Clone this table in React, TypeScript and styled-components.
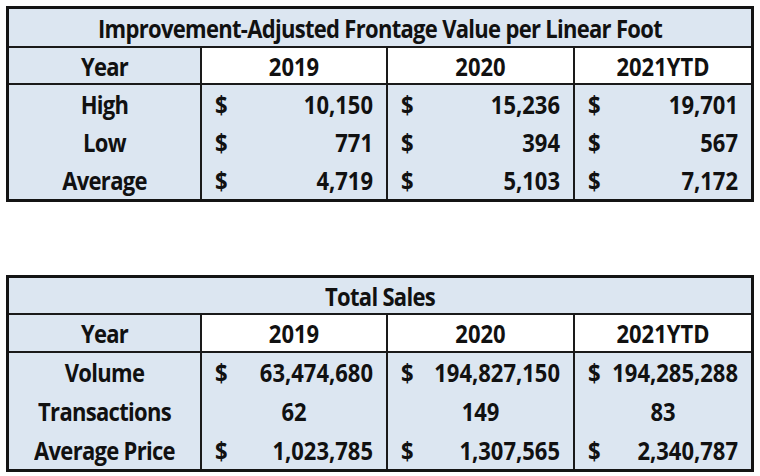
import styled, { createGlobalStyle } from 'styled-components';

const Global = createGlobalStyle`
  body {
    margin: 0;
    background: #ffffff;
    font-family: 'Open Sans', 'Liberation Sans', sans-serif;
  }
`;

const Page = styled.div`
  display: flex;
  flex-direction: column;
  gap: 73px;
  padding: 6px 0 0 6px;
  width: 748px;
`;

const Table = styled.div<{ $rows: string }>`
  display: grid;
  grid-template-columns: 191px 186px 187px 178px;
  grid-template-rows: ${({ $rows }) => $rows};
  border: 3px solid #141414;
  background: #dce6f1;
  color: #111;
  font-weight: 700;
  font-size: 22px;
`;

// Calibri in the original is a little taller than Open Sans at the same width
const Txt = styled.span`
  display: inline-block;
  transform: scaleY(1.1);
`;

const Title = styled.div`
  grid-column: 1 / -1;
  display: flex;
  align-items: center;
  justify-content: center;
  letter-spacing: -0.7px;
  border-bottom: 2px solid #1a1a1a;
`;

const Cell = styled.div<{ $head?: boolean; $first?: boolean; $white?: boolean }>`
  display: flex;
  align-items: center;
  justify-content: center;
  letter-spacing: ${({ $first }) => ($first ? '-0.7px' : '0')};
  background: ${({ $white }) => ($white ? '#ffffff' : 'transparent')};
  border-left: ${({ $first }) => ($first ? 'none' : '2px solid #1a1a1a')};
  border-bottom: ${({ $head }) => ($head ? '2px solid #1a1a1a' : 'none')};
`;

const Money = styled(Cell)`
  justify-content: space-between;
  padding: 0 13px 0 13px;
`;

type Val = { cur?: boolean; v: string };

const years = ['2019', '2020', '2021YTD'];

const frontage: [string, Val[]][] = [
  ['High', [{ cur: true, v: '10,150' }, { cur: true, v: '15,236' }, { cur: true, v: '19,701' }]],
  ['Low', [{ cur: true, v: '771' }, { cur: true, v: '394' }, { cur: true, v: '567' }]],
  ['Average', [{ cur: true, v: '4,719' }, { cur: true, v: '5,103' }, { cur: true, v: '7,172' }]],
];

const sales: [string, Val[]][] = [
  ['Volume', [{ cur: true, v: '63,474,680' }, { cur: true, v: '194,827,150' }, { cur: true, v: '194,285,288' }]],
  ['Transactions', [{ v: '62' }, { v: '149' }, { v: '83' }]],
  ['Average Price', [{ cur: true, v: '1,023,785' }, { cur: true, v: '1,307,565' }, { cur: true, v: '2,340,787' }]],
];

function DataTable({ title, rows, heights }: { title: string; rows: [string, Val[]][]; heights: string }) {
  return (
    <Table $rows={heights}>
      <Title><Txt>{title}</Txt></Title>
      <Cell $head $first><Txt>Year</Txt></Cell>
      {years.map((y) => (
        <Cell key={y} $head $white><Txt>{y}</Txt></Cell>
      ))}
      {rows.map(([label, vals]) => [
        <Cell key={label} $first><Txt>{label}</Txt></Cell>,
        ...vals.map((val, i) =>
          val.cur ? (
            <Money key={label + i}>
              <Txt>$</Txt>
              <Txt>{val.v}</Txt>
            </Money>
          ) : (
            <Cell key={label + i}><Txt>{val.v}</Txt></Cell>
          )
        ),
      ])}
    </Table>
  );
}

export default function App() {
  return (
    <>
      <Global />
      <Page>
        <DataTable
          title="Improvement-Adjusted Frontage Value per Linear Foot"
          rows={frontage}
          heights="39px 37px 38px 38px 38px"
        />
        <DataTable title="Total Sales" rows={sales} heights="37px 38px 38.7px 38.7px 38.6px" />
      </Page>
    </>
  );
}
